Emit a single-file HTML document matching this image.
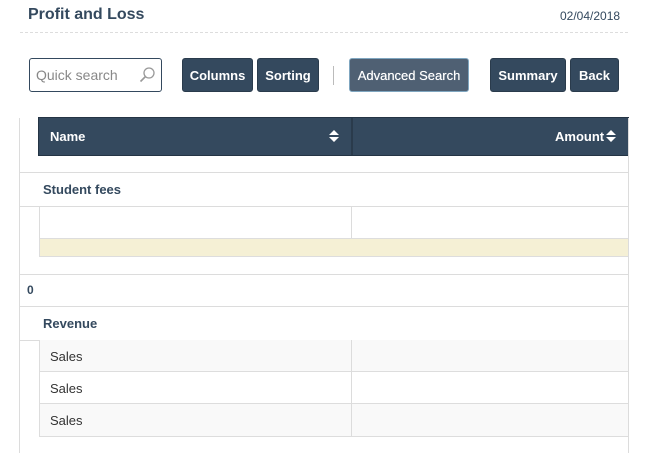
<!DOCTYPE html>
<html><head><style>
*{margin:0;padding:0;box-sizing:border-box}
body{width:658px;height:453px;background:#fff;font-family:"Liberation Sans",sans-serif;position:relative;overflow:hidden;color:#333}
.a{position:absolute}
.btn{position:absolute;top:58px;height:34px;background:#34495e;color:#fff;font-size:13px;font-weight:bold;border-radius:3px;display:flex;align-items:center;justify-content:center;border:1px solid #2a3b4c}
.h{background:#dcdcdc}
.t{font-size:13px;font-weight:bold;color:#34495e}
</style></head><body>
<div class="a" style="left:28px;top:6px;font-size:16px;font-weight:bold;color:#34495e">Profit and Loss</div>
<div class="a" style="left:560px;top:9px;font-size:12px;color:#34495e">02/04/2018</div>
<div class="a" style="left:20px;top:32px;width:608px;border-top:1px dashed #ddd"></div>
<div class="a" style="left:29px;top:58px;width:133px;height:34px;border:1px solid #34495e;border-radius:3px;font-size:14px;color:#888;padding:8px 0 0 6px">Quick search</div>
<svg class="a" style="left:138px;top:66px" width="18" height="18" viewBox="0 0 18 18"><circle cx="11" cy="7" r="5" fill="none" stroke="#999" stroke-width="1.3"/><path d="M7.5 10.5L2.5 15.5" stroke="#999" stroke-width="1.6"/></svg>
<div class="btn" style="left:182px;width:71px">Columns</div>
<div class="btn" style="left:257px;width:62px">Sorting</div>
<div class="a" style="left:333px;top:66px;width:1px;height:19px;background:#bbb"></div>
<div class="btn" style="left:349px;width:120px;background:#4f6073;border-color:#7fa6c0;font-weight:normal;text-shadow:0 0 0.5px #fff">Advanced Search</div>
<div class="btn" style="left:490px;width:76px">Summary</div>
<div class="btn" style="left:570px;width:49px">Back</div>
<div class="a h" style="left:19px;top:118px;width:1px;height:335px;z-index:5"></div>
<div class="a h" style="left:628px;top:118px;width:1px;height:335px;z-index:5"></div>
<div class="a" style="left:38px;top:117px;width:591px;height:39px;background:#34495e;border:1px solid #243444"></div>
<div class="a" style="left:351px;top:118px;width:2px;height:37px;background:#2a3b4c"></div>
<div class="a" style="left:50px;top:129px;color:#fff;font-size:13px;font-weight:bold">Name</div>
<div class="a" style="left:555px;top:129px;color:#fff;font-size:13px;font-weight:bold">Amount</div>
<svg class="a" style="left:606px;top:130px" width="10" height="12"><path d="M0 5L5 0L10 5ZM0 7L5 12L10 7Z" fill="#fff"/></svg>
<svg class="a" style="left:329px;top:130px" width="10" height="12"><path d="M0 5L5 0L10 5ZM0 7L5 12L10 7Z" fill="#fff"/></svg>
<div class="a h" style="left:19px;top:172px;width:610px;height:1px"></div>
<div class="a t" style="left:43px;top:182px">Student fees</div>
<div class="a h" style="left:19px;top:206px;width:610px;height:1px"></div>
<div class="a h" style="left:39px;top:206px;width:1px;height:51px"></div>
<div class="a h" style="left:351px;top:206px;width:1px;height:32px"></div>
<div class="a" style="left:39px;top:238px;width:590px;height:19px;background:#f5f0d5;border-top:1px solid #ddd;border-bottom:1px solid #ddd;border-left:1px solid #ddd"></div>
<div class="a h" style="left:19px;top:274px;width:610px;height:1px"></div>
<div class="a t" style="left:27px;top:283px;font-size:12px">0</div>
<div class="a h" style="left:19px;top:306px;width:610px;height:1px"></div>
<div class="a t" style="left:43px;top:316px">Revenue</div>
<div class="a h" style="left:19px;top:340px;width:610px;height:1px"></div>
<div class="a" style="left:39px;top:340px;width:590px;height:97px;border-left:1px solid #ddd;border-bottom:1px solid #ddd">
<div style="height:32px;background:#f9f9f9;border-bottom:1px solid #ddd;font-size:13px;padding:9px 10px">Sales</div>
<div style="height:32px;background:#fff;border-bottom:1px solid #ddd;font-size:13px;padding:9px 10px">Sales</div>
<div style="height:32px;background:#f9f9f9;font-size:13px;padding:9px 10px">Sales</div>
</div>
<div class="a h" style="left:351px;top:340px;width:1px;height:96px"></div>
</body></html>
